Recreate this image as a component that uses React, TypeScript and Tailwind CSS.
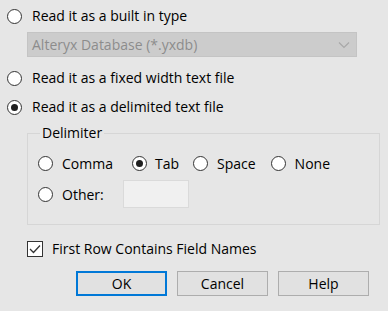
import React from 'react';

function Radio({ checked = false }: { checked?: boolean }) {
  return (
    <span className="w-[15px] h-[15px] rounded-full border border-[#333333] bg-white flex items-center justify-center shrink-0">
      {checked && <span className="w-[7px] h-[7px] rounded-full bg-[#1f1f1f]" />}
    </span>
  );
}

function RadioRow({ label, checked, className = '' }: { label: string; checked?: boolean; className?: string }) {
  return (
    <div className={`flex items-center h-[20px] ${className}`}>
      <Radio checked={checked} />
      <span className="ml-[10px] leading-none">{label}</span>
    </div>
  );
}

export default function App() {
  return (
    <div
      className="w-[388px] h-[311px] bg-[#e6e6e6] text-[14px] text-black flex flex-col overflow-hidden"
      style={{ fontFamily: '"Segoe UI", "Open Sans", "Noto Sans", sans-serif' }}
    >
      <RadioRow label="Read it as a built in type" className="ml-[7px] mt-[6px]" />

      {/* Disabled file type dropdown */}
      <div className="ml-[27px] mt-[6px] w-[330px] h-[25px] bg-[#cccccc] border border-[#c4c4c4] flex items-center justify-between pl-[4px] pr-[6px] text-[#8c8c8c]">
        <span className="leading-none">Alteryx Database (*.yxdb)</span>
        <svg width="12" height="8" viewBox="0 0 12 8" fill="none">
          <path d="M1 1.5 L6 6.5 L11 1.5" stroke="#a8a8a8" strokeWidth="1.2" />
        </svg>
      </div>

      <RadioRow label="Read it as a fixed width text file" className="ml-[7px] mt-[11px]" />
      <RadioRow label="Read it as a delimited text file" checked className="ml-[7px] mt-[9px]" />

      {/* Delimiter group */}
      <fieldset className="ml-[27px] mt-[8px] w-[353px] h-[100px] border border-[#d6d6d6] px-[10px]">
        <legend className="ml-[2px] px-[2px] leading-[16px]">Delimiter</legend>
        <div className="flex items-center mt-[12px]">
          <Radio />
          <span className="ml-[9px] mr-[19px]">Comma</span>
          <Radio checked />
          <span className="ml-[8px] mr-[14px]">Tab</span>
          <Radio />
          <span className="ml-[9px] mr-[15px]">Space</span>
          <Radio />
          <span className="ml-[9px]">None</span>
        </div>
        <div className="flex items-center mt-[6px]">
          <Radio />
          <span className="ml-[9px] w-[61px]">Other:</span>
          <div className="w-[66px] h-[28px] bg-[#f0f0f0] border border-[#dadada]" />
        </div>
      </fieldset>

      {/* Header row checkbox */}
      <div className="flex items-center ml-[27px] mt-[13px]">
        <span className="w-[16px] h-[16px] border border-[#333333] bg-white flex items-center justify-center">
          <svg width="12" height="10" viewBox="0 0 12 10" fill="none">
            <path d="M1 5 L4.5 8.5 L11 1.5" stroke="#333333" strokeWidth="1.3" />
          </svg>
        </span>
        <span className="ml-[9px]">First Row Contains Field Names</span>
      </div>

      <div className="flex ml-[76px] mt-[12px] gap-[10px]">
        <button className="w-[91px] h-[25px] bg-[#e1e1e1] border-2 border-[#0078d7] leading-none">OK</button>
        <button className="w-[91px] h-[25px] bg-[#e1e1e1] border border-[#adadad] leading-none">Cancel</button>
        <button className="w-[91px] h-[25px] bg-[#e1e1e1] border border-[#adadad] leading-none">Help</button>
      </div>
    </div>
  );
}
